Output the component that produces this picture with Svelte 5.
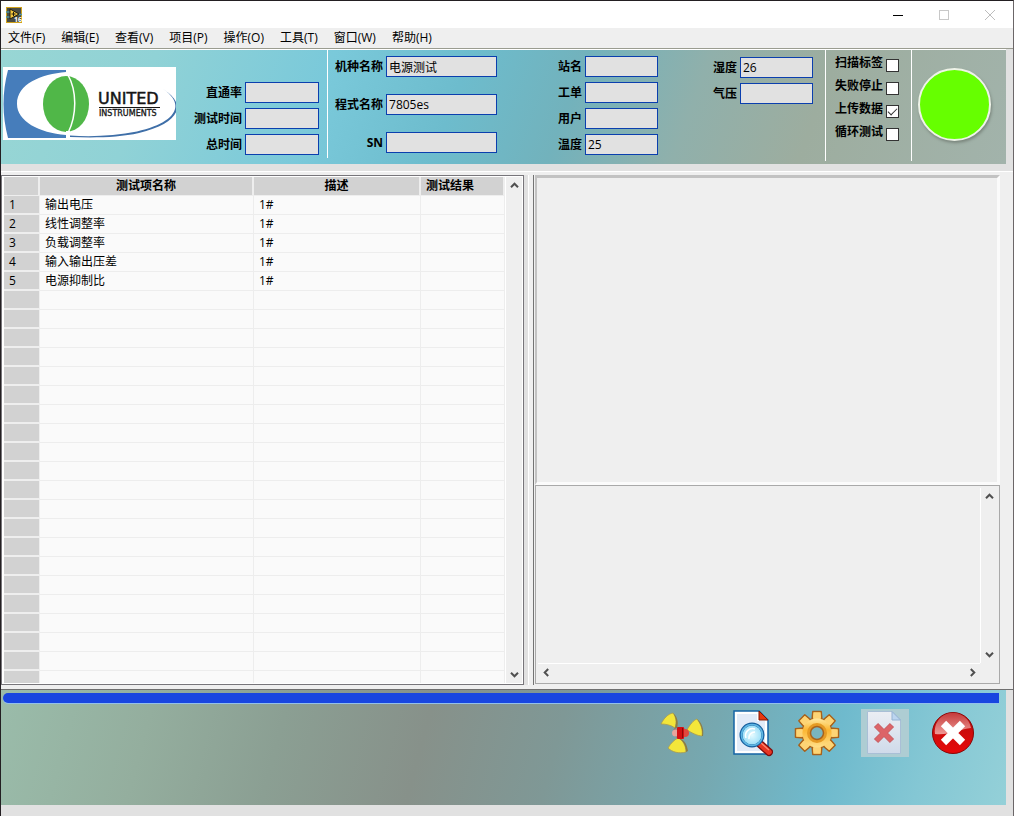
<script>
  const menus = ['文件(F)', '编辑(E)', '查看(V)', '项目(P)', '操作(O)', '工具(T)', '窗口(W)', '帮助(H)'];

  let times = $state([
    { id: 'pass', label: '直通率', value: '' },
    { id: 'test-time', label: '测试时间', value: '' },
    { id: 'total-time', label: '总时间', value: '' }
  ]);

  let product = $state([
    { id: 'model', label: '机种名称', value: '电源测试' },
    { id: 'program', label: '程式名称', value: '7805es' },
    { id: 'sn', label: 'SN', value: '' }
  ]);

  let station = $state([
    { id: 'station', label: '站名', value: '' },
    { id: 'order', label: '工单', value: '' },
    { id: 'user', label: '用户', value: '' },
    { id: 'temp', label: '温度', value: '25' }
  ]);

  let air = $state([
    { id: 'humidity', label: '湿度', value: '26' },
    { id: 'pressure', label: '气压', value: '' }
  ]);

  let options = $state([
    { id: 'scan', label: '扫描标签', checked: false },
    { id: 'fail-stop', label: '失败停止', checked: false },
    { id: 'upload', label: '上传数据', checked: true },
    { id: 'loop', label: '循环测试', checked: false }
  ]);

  const items = ['输出电压', '线性调整率', '负载调整率', '输入输出压差', '电源抑制比'];
  const ROWS = 26;
  const rows = Array.from({ length: ROWS }, (_, i) => items[i] ?? '');

  const teeth = [0, 45, 90, 135, 180, 225, 270, 315];
</script>

{#snippet fields(list, kind)}
  <div class="fields {kind}">
    {#each list as f (f.id)}
      <label for={f.id}>{f.label}</label>
      <input type="text" id={f.id} bind:value={f.value} />
    {/each}
  </div>
{/snippet}

{#snippet arrow(dir, label)}
  <button class="arrow" aria-label={label}>
    <svg class={dir} width="9" height="9" viewBox="0 0 9 9">
      <path d="M1 6.2 L4.5 2.7 L8 6.2" fill="none" stroke="#505050" stroke-width="2" />
    </svg>
  </button>
{/snippet}

<div class="window">
  <header class="titlebar">
    <svg class="appicon" width="16" height="16" viewBox="0 0 16 16">
      <rect x="0.5" y="0.5" width="15" height="15" fill="#4a4c44" stroke="#d0a21c" />
      <path d="M0 5H5M0 10H5M12 7.5H16" stroke="#4e93a0" stroke-width="1.5" />
      <path d="M4 2 L13 7 L4 12 Z" fill="#f3c63c" stroke="#211c10" />
      <path d="M5.5 7H9.5M7.5 5V9" stroke="#211c10" stroke-width="1" />
      <text x="8" y="15" font-size="7" font-weight="700" fill="#fff">16</text>
    </svg>
    <div class="controls">
      <button aria-label="最小化"><svg width="10" height="10"><path d="M0 5.5H10" stroke="#000" /></svg></button>
      <button aria-label="最大化"><svg width="10" height="10"><rect x="0.5" y="0.5" width="9" height="9" fill="none" stroke="#c8c8c8" /></svg></button>
      <button aria-label="关闭"><svg width="10" height="10"><path d="M0 0L10 10M10 0L0 10" stroke="#bdbdbd" /></svg></button>
    </div>
  </header>

  <nav class="menu">
    {#each menus as m}
      <button>{m}</button>
    {/each}
  </nav>

  <section class="info">
    <div class="group times">
      <svg class="logo" width="173" height="73" viewBox="0 0 173 73">
        <rect width="173" height="73" fill="#fff" />
        <path d="M5 3 H63 V5 C38 7 14 17 14 37 C14 54 36 66 63 68 V71 H5 C-1 48 -1 26 5 3 Z" fill="#467dbb" />
        <path d="M160 22 C184 38 172 56 134 64.5 C112 69 88 70 67 68.5 V70 C92 71 116 70.5 136 66 C175 57 186 38 160 22 Z" fill="#3f6fa8" />
        <ellipse cx="63" cy="37" rx="23" ry="28" fill="#50b748" />
        <path d="M65 8 C74 24 74 48 65 66" fill="none" stroke="#fff" stroke-width="1.5" />
        <path d="M65 0 V9 M65 64 V73" stroke="#fff" stroke-width="4" />
        <text x="95" y="37" font-size="16" fill="#151515" stroke="#151515" stroke-width="0.5">UNITED</text>
        <path d="M96 40.5 H157" stroke="#151515" />
        <text x="96" y="49" font-size="8" fill="#151515" stroke="#151515" stroke-width="0.3">INSTRUMENTS</text>
      </svg>
      {@render fields(times, 'narrow')}
    </div>
    <div class="group product">{@render fields(product, 'wide')}</div>
    <div class="group station">{@render fields(station, 'narrow')}</div>
    <div class="group air">{@render fields(air, 'narrow')}</div>
    <div class="group options">
      {#each options as o (o.id)}
        <div class="check">
          <label for={o.id}>{o.label}</label>
          <input type="checkbox" id={o.id} bind:checked={o.checked} />
        </div>
      {/each}
    </div>
    <div class="group status">
      <div class="led"></div>
    </div>
  </section>

  <main>
    <div class="pane list">
      <div class="tablebox">
        <table>
          <colgroup>
            <col class="c-num" />
            <col />
            <col class="c-desc" />
            <col class="c-result" />
          </colgroup>
          <thead>
            <tr><th></th><th>测试项名称</th><th>描述</th><th class="left">测试结果</th></tr>
          </thead>
          <tbody>
            {#each rows as name, i}
              <tr>
                <td class="num">{name ? i + 1 : ''}</td>
                <td>{name}</td>
                <td>{name ? '1#' : ''}</td>
                <td></td>
              </tr>
            {/each}
          </tbody>
        </table>
      </div>
      <div class="vscroll">
        {@render arrow('up', '向上')}
        {@render arrow('down', '向下')}
      </div>
    </div>
    <div class="splitter"></div>
    <div class="right">
      <div class="view"></div>
      <div class="log">
        <div class="logtext"></div>
        <div class="vscroll">
          {@render arrow('up', '向上')}
          {@render arrow('down', '向下')}
        </div>
        <div class="hscroll">
          {@render arrow('prev', '向左')}
          {@render arrow('next', '向右')}
        </div>
      </div>
    </div>
  </main>

  <footer>
    <div class="progress"></div>
    <div class="tools">
      <button aria-label="运行">
        <svg width="48" height="48" viewBox="0 0 48 48">
          <g stroke="#a89a50" stroke-width="0.8">
            <path d="M4 15 C7 9 11 5 16 4 C19 8 20 13 18 19 C14 16 9 15 4 15 Z" fill="#f3e63a" />
            <path d="M30 21 C33 15 37 11 40 10 C44 15 46 21 45 27 C41 27 35 24 30 21 Z" fill="#f3e63a" />
            <path d="M21 29 C26 31 29 37 29 43 C22 45 15 43 11 39 C14 34 17 31 21 29 Z" fill="#f3e63a" />
          </g>
          <path d="M16 4 C19 8 20 13 18 19 L20 19 C22 13 20 7 16 4 Z M40 10 C44 15 46 21 45 27 L46 27 C47 20 45 14 40 10 Z M21 29 C26 31 29 37 29 43 L31 42 C30 35 27 30 21 29 Z" fill="#8d7d42" />
          <path d="M17 20 L28 27 M28 20 L19 28" stroke="#8f7770" stroke-width="3" />
          <ellipse cx="19" cy="24" rx="4" ry="3.5" fill="#e8a49c" />
          <ellipse cx="28" cy="24" rx="4" ry="4" fill="#e0483e" />
          <rect x="20" y="18" width="7" height="12" rx="1" fill="#d40f12" />
          <path d="M25.5 19V29" stroke="#8e0808" />
        </svg>
      </button>
      <button aria-label="查找">
        <svg width="48" height="48" viewBox="0 0 48 48">
          <defs>
            <radialGradient id="lens"><stop offset="0" stop-color="#e6fbff" /><stop offset="1" stop-color="#94dcf7" /></radialGradient>
          </defs>
          <path d="M9 2 H34 L43 11 V45 H9 Z" fill="#fff" stroke="#1464a5" stroke-width="1.5" />
          <path d="M12 5 H32 V12 H40 V42 H12 Z" fill="#e2ebf8" />
          <path d="M34 2 V11 H43 Z" fill="#e8380f" stroke="#7c1607" />
          <path d="M35 35 L44 43" stroke="#7e0d0d" stroke-width="8" stroke-linecap="round" />
          <path d="M35 35 L44 43" stroke="#e63523" stroke-width="5.5" stroke-linecap="round" />
          <path d="M36 34 L44 41" stroke="#ff8a72" stroke-width="1.2" />
          <circle cx="27" cy="26" r="11" fill="url(#lens)" stroke="#165f9e" stroke-width="3" />
          <circle cx="27" cy="26" r="10.5" fill="none" stroke="#5fb7e4" stroke-width="1.6" />
          <path d="M21 29 A7 7 0 0 1 30 20 M24 30 A6 6 0 0 1 30 23" fill="none" stroke="#fff" stroke-width="1.6" />
        </svg>
      </button>
      <button aria-label="设置">
        <svg width="48" height="48" viewBox="0 0 48 48">
          <defs>
            <linearGradient id="gold" x1="0" y1="0" x2="0" y2="1"><stop offset="0" stop-color="#ffe9a0" /><stop offset="0.4" stop-color="#fbb632" /><stop offset="1" stop-color="#ffe08a" /></linearGradient>
          </defs>
          {#each teeth as t}
            <path d="M19 11 L19.8 2.5 H28.2 L29 11 Z" fill="#fdcf63" stroke="#a8621c" stroke-width="1.5" stroke-linejoin="round" transform="rotate({t} 24 24)" />
          {/each}
          <circle cx="24" cy="24" r="15" fill="none" stroke="#a8621c" stroke-width="1.2" />
          {#each teeth as t}
            <path d="M20 13 L20.6 3.5 H27.4 L28 13 Z" fill="#fdd475" transform="rotate({t} 24 24)" />
          {/each}
          <circle cx="24" cy="24" r="14.6" fill="url(#gold)" />
          <circle cx="24" cy="24" r="8.5" fill="none" stroke="#e59a24" stroke-width="3" />
          <circle cx="24" cy="24" r="6.5" fill="#79b5c0" stroke="#a8621c" stroke-width="1.5" />
        </svg>
      </button>
      <button class="off" disabled aria-label="删除">
        <svg width="48" height="48" viewBox="0 0 48 48">
          <defs>
            <linearGradient id="sheet" x1="0" y1="0" x2="0" y2="1"><stop offset="0" stop-color="#ebeef3" /><stop offset="1" stop-color="#cfdaea" /></linearGradient>
          </defs>
          <path d="M6.5 2.5 H31 L39.5 11 V44.5 H6.5 Z" fill="url(#sheet)" stroke="#a9bfd6" />
          <path d="M31 2.5 V11 H39.5 Z" fill="#bcd5ef" stroke="#94b3d3" />
          <path d="M15 16 L31 32 M31 16 L15 32" stroke="#c46066" stroke-width="6" />
          <path d="M15.5 16.5 L30.5 31.5 M30.5 16.5 L15.5 31.5" stroke="#dc6468" stroke-width="4.5" />
        </svg>
      </button>
      <button aria-label="退出">
        <svg width="48" height="48" viewBox="0 0 48 48">
          <defs>
            <linearGradient id="red" x1="0" y1="0" x2="0" y2="1"><stop offset="0" stop-color="#b5100f" /><stop offset="1" stop-color="#e80808" /></linearGradient>
            <linearGradient id="gloss" x1="0" y1="0" x2="0" y2="1"><stop offset="0" stop-color="#c43a3a" /><stop offset="1" stop-color="#ef9a96" /></linearGradient>
          </defs>
          <circle cx="24" cy="24" r="20.5" fill="url(#red)" stroke="#8a0506" />
          <path d="M6 25 A18 18 0 0 1 42 19 C32 20 18 27 6 25 Z" fill="url(#gloss)" />
          <path d="M14.5 14.5 L33.5 33.5 M33.5 14.5 L14.5 33.5" stroke="#fff" stroke-width="7.5" />
        </svg>
      </button>
    </div>
  </footer>
</div>

<style>
  :global(body) {
    background: #e1e1e1;
  }

  .window {
    box-sizing: border-box;
    height: 100vh;
    min-height: 480px;
    display: flex;
    flex-direction: column;
    border: solid #6b6668;
    border-width: 1px 1px 0;
    border-top-color: #231f22;
    border-left-color: #231f22;
    background: #e1e1e1;
    color: #000;
    font-family: "Open Sans", "Noto Sans CJK SC", sans-serif;
    font-size: 12px;
    line-height: 16px;
  }

  button {
    padding: 0;
    border: 0;
    background: none;
    color: inherit;
    font: inherit;
    display: block;
  }

  svg {
    display: block;
  }

  /* title bar and menu */
  .titlebar {
    display: flex;
    justify-content: space-between;
    align-items: center;
    height: 27px;
    padding-left: 5px;
    background: #fff;
  }

  .controls {
    display: flex;
  }

  .controls button {
    width: 46px;
    height: 27px;
    display: grid;
    place-items: center;
  }

  .menu {
    display: flex;
    gap: 16px;
    height: 20px;
    padding-left: 7px;
    background: #efefef;
    border-bottom: 1px solid #9a9c90;
  }

  .menu button {
    white-space: nowrap;
  }

  /* test info */
  .info {
    display: flex;
    height: 114px;
    margin-right: 7px;
    border-top: 1px solid #fff;
    background: linear-gradient(110deg, #98d6d4 0%, #90d2d6 15%, #7ac9da 32%, #6dbccd 45%, #72b2bc 56%, #90b0ab 68%, #9dad9f 80%, #a2b3ab 100%);
  }

  .group {
    display: flex;
    flex-shrink: 0;
  }

  .times {
    box-sizing: border-box;
    width: 327px;
    height: 108px;
    padding: 0 8px 0 2px;
    justify-content: space-between;
    border-right: 1px solid #fff;
  }

  .logo {
    margin-top: 17px;
    font-family: "DejaVu Sans", sans-serif;
  }

  .fields {
    display: grid;
    grid-template-columns: auto auto;
    gap: 5px 3px;
    align-content: start;
    align-items: center;
    text-align: right;
    font-weight: 700;
    padding-top: 6px;
  }

  .times .fields {
    padding-top: 32px;
  }

  .product .fields {
    row-gap: 17px;
    padding-left: 7px;
    padding-right: 6px;
  }

  .station,
  .air {
    margin-left: auto;
  }

  .air {
    padding-right: 12px;
  }

  .air .fields {
    padding-top: 7px;
  }

  .fields input {
    box-sizing: border-box;
    width: 73px;
    height: 21px;
    margin: 0;
    padding: 0 2px;
    border: 1px solid #0b3fae;
    border-radius: 0;
    background: #e1e1e1;
    font: inherit;
    font-weight: 400;
  }

  .times input {
    width: 74px;
  }

  .wide input {
    width: 111px;
  }

  .options {
    flex-direction: column;
    gap: 6px;
    height: 106px;
    padding: 5px 12px 0 9px;
    border: solid #fff;
    border-width: 0 1px;
  }

  .check {
    display: flex;
    align-items: flex-end;
    gap: 3px;
    height: 17px;
    font-weight: 700;
  }

  .check label {
    align-self: flex-start;
  }

  .check input {
    appearance: none;
    box-sizing: border-box;
    display: grid;
    place-items: center;
    width: 13px;
    height: 13px;
    margin: 0;
    border: 1px solid #333;
    background: #fff;
  }

  .check input:checked::after {
    content: "";
    width: 8px;
    height: 4px;
    margin-bottom: 3px;
    border: solid #333;
    border-width: 0 0 1px 1px;
    transform: rotate(-45deg);
  }

  .status {
    padding: 18px 15px 0 6px;
  }

  .led {
    box-sizing: border-box;
    width: 73px;
    height: 73px;
    border: 2px solid #eef3e8;
    border-radius: 50%;
    background: #66ff00;
    box-shadow: 1px 2px 3px #7a867d;
  }

  /* results and output */
  main {
    flex: 1;
    min-height: 0;
    display: grid;
    grid-template-columns: minmax(0, 523fr) 11px minmax(0, 465fr);
    margin-top: 7px;
    padding: 3px 13px 4px 0;
    border-top: 1px solid #fff;
    border-bottom: 1px solid #6f6f6f;
    background: #efefef;
  }

  .pane {
    box-sizing: border-box;
    min-height: 0;
    display: flex;
    border: 1px solid #77757a;
    background: #fff;
    padding: 1px 1px 1px 2px;
  }

  .tablebox {
    flex: 1;
    min-width: 0;
    overflow: hidden;
    background: #fafafa;
  }

  table {
    width: 100%;
    table-layout: fixed;
    border-collapse: separate;
    border-spacing: 0;
  }

  .c-num {
    width: 36px;
  }

  .c-desc {
    width: 167px;
  }

  .c-result {
    width: 84px;
  }

  th,
  td {
    box-sizing: border-box;
    height: 19px;
    padding: 0 5px;
    line-height: 16px;
    white-space: nowrap;
    text-align: left;
    border-right: 1px solid #ededed;
    border-bottom: 1px solid #ededed;
  }

  th {
    background: #d2d2d2;
    text-align: center;
    border-right: 2px solid #eee;
    border-bottom: 1px solid #eee;
  }

  th.left {
    text-align: left;
  }

  .num {
    background: #d2d2d2;
    border-right: 1px solid #eee;
    border-bottom: 2px solid #eee;
  }

  .vscroll {
    box-sizing: border-box;
    width: 17px;
    display: flex;
    flex-direction: column;
    justify-content: space-between;
    background: #efefef;
    border-left: 1px solid #fff;
  }

  .arrow {
    width: 16px;
    height: 17px;
    display: grid;
    place-items: center;
  }

  .down {
    transform: rotate(180deg);
  }

  .prev {
    transform: rotate(-90deg);
  }

  .next {
    transform: rotate(90deg);
  }

  .splitter {
    background: linear-gradient(90deg, #e1e1e1 4px, #fff 4px 5px, #efefef 5px 9px, #737373 9px 10px, #efefef 10px);
  }

  .right {
    min-height: 0;
    display: grid;
    grid-template-rows: minmax(0, 310fr) minmax(0, 199fr);
    padding-bottom: 1px;
  }

  .view {
    border: solid #c2c2c2;
    border-width: 3px 3px 3px 2px;
    border-right-color: #fbfbfb;
    border-bottom-color: #fbfbfb;
    background: #efefef;
  }

  .log {
    display: grid;
    grid-template: minmax(0, 1fr) 18px / minmax(0, 1fr) 17px;
    padding: 2px;
    border: 1px solid #a9a9a9;
    background: #efefef;
  }

  .hscroll {
    display: flex;
    justify-content: space-between;
    border-top: 1px solid #fff;
  }

  /* bottom bar */
  footer {
    box-sizing: border-box;
    height: 115px;
    margin: 0 7px 11px 0;
    padding-top: 3px;
    background: linear-gradient(105deg, #9abcaa 0%, #94ae9e 15%, #8b9f93 28%, #87918a 42%, #7f9896 55%, #76a8b0 70%, #6fbacd 82%, #84c7d4 91%, #94d0d8 100%);
  }

  .progress {
    height: 10px;
    margin: 0 7px 0 2px;
    border-radius: 5px 0 0 5px;
    background: #1846e0;
    box-shadow: 0 1px #93c0ea;
  }

  .tools {
    display: flex;
    justify-content: flex-end;
    gap: 20px;
    padding: 6px 29px 0 0;
  }

  .off {
    background: #aecdd3;
  }
</style>
